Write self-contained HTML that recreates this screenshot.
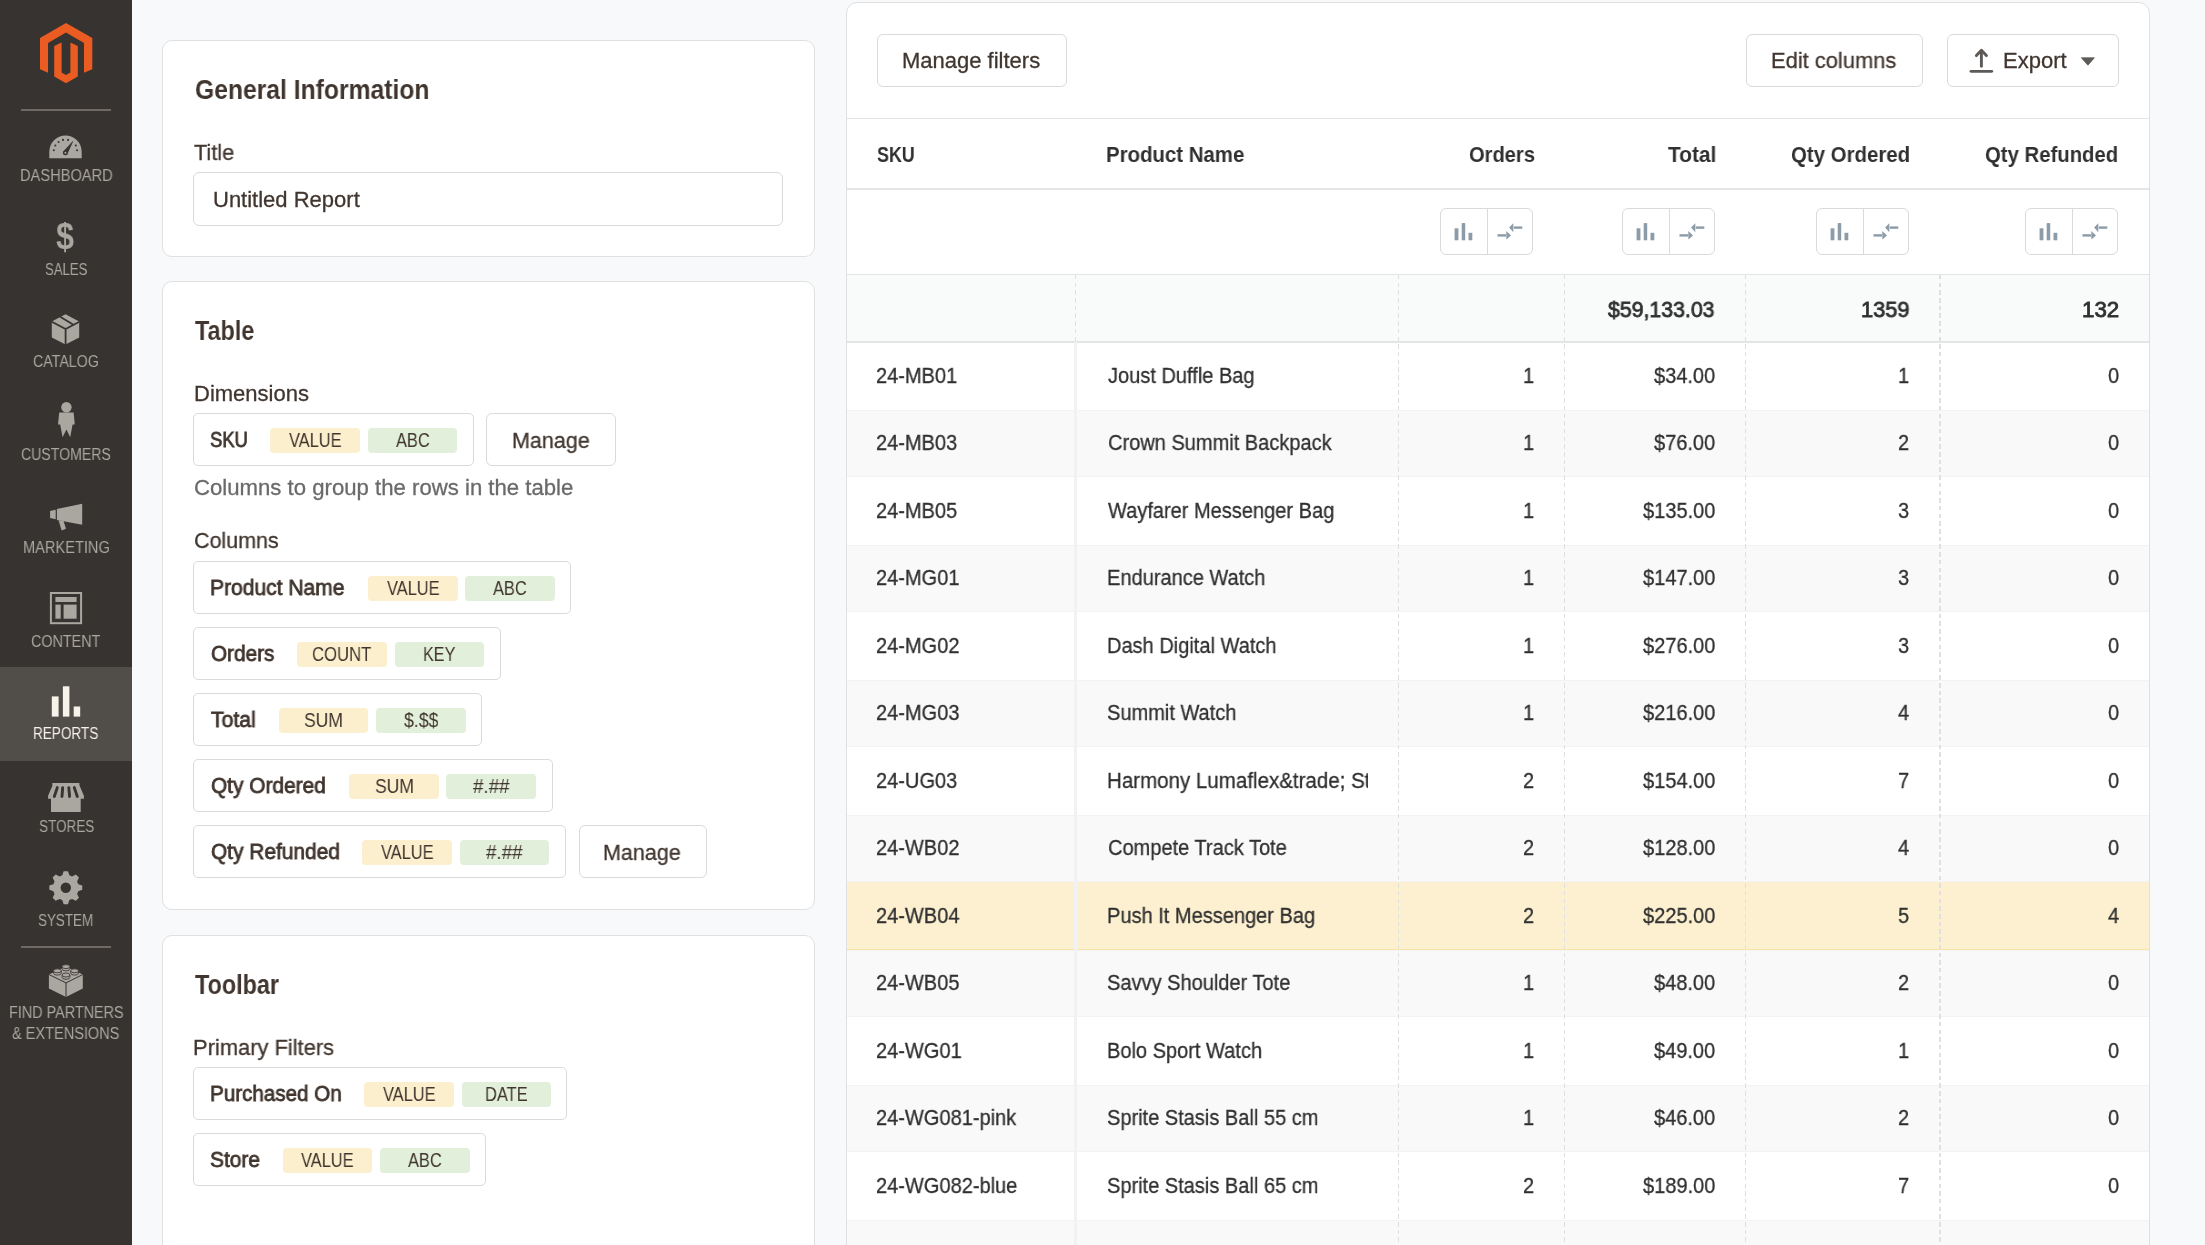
<!DOCTYPE html>
<html><head><meta charset="utf-8"><title>Report</title>
<style>
html,body{margin:0;padding:0;}
body{width:2205px;height:1245px;overflow:hidden;position:relative;background:#f8f9fa;font-family:"Liberation Sans",sans-serif;}
.t{position:absolute;line-height:40px;white-space:pre;transform-origin:0 0;will-change:transform;}
.a{position:absolute;box-sizing:border-box;}
svg{position:absolute;overflow:visible;}
</style></head><body>
<div class='a' style='left:0;top:0;width:132px;height:1245px;background:#373330'></div><div class='a' style='left:0;top:667px;width:132px;height:93.5px;background:#514d48'></div><svg style='left:0;top:0' width='132' height='100'>
<path fill='#eb5c22' d='M66 23 L92.3 38 L92.3 69.2 L84 72.8 L84 43 L66 32.6 L48 43 L48 72.8 L40 69.2 L40 38 Z'/>
<path fill='#eb5c22' d='M54.2 46 L61.6 42.4 L61.6 72.6 L66 75 L70.4 72.6 L70.4 42.4 L77.8 46 L77.8 76.5 L66 83.3 L54.2 76.5 Z'/>
</svg><div class='a' style='left:21px;top:109px;width:90px;height:1.5px;background:#6e6964'></div><div class='a' style='left:21px;top:946.3px;width:90px;height:1.5px;background:#6e6964'></div><svg style='left:0;top:0' width='132' height='200'>
<path fill='#aaa6a0' d='M49.3 158.2 L49.3 151.8 A16.2 16.2 0 0 1 81.7 151.8 L81.7 158.2 Z'/>
<g fill='#373330'>
<circle cx='53.8' cy='150.2' r='1.05'/><circle cx='55.3' cy='145.5' r='1.05'/><circle cx='58.6' cy='142' r='1.05'/>
<circle cx='63' cy='139.9' r='1.05'/><circle cx='68.1' cy='139.9' r='1.05'/>
<circle cx='75.8' cy='145.5' r='1.05'/><circle cx='77.1' cy='150.2' r='1.05'/>
<path d='M63.3 151.6 L72.6 141.2 L73.1 141.6 L67.6 153.6 Z'/>
<circle cx='65.4' cy='152.8' r='2.5'/>
</g>
<circle cx='65.4' cy='152.8' r='1.05' fill='#aaa6a0'/>
</svg><svg style='left:0;top:0' width='132' height='400'>
<path fill='#aaa6a0' d='M65.5 314.2 L79.2 321.6 L79.2 337.4 L65.5 344.6 L51.8 337.4 L51.8 321.6 Z'/>
<g stroke='#373330' stroke-width='1.8' fill='none'>
<path d='M51.8 321.8 L65.6 329 L79.4 321.8 M65.6 329 L65.6 345'/>
<path d='M60.2 316.7 L73.4 324.7'/>
</g>
</svg><svg style='left:0;top:0' width='132' height='460'>
<circle cx='66.4' cy='407.2' r='5.2' fill='#aaa6a0'/>
<path fill='#aaa6a0' d='M59.2 412.6 L73.6 412.6 L74.8 424.6 L72.6 424.6 L70.2 437.2 L66.4 429.5 L62.6 437.2 L60.2 424.6 L58 424.6 Z'/>
</svg><svg style='left:0;top:0' width='132' height='560'>
<path fill='#aaa6a0' d='M50.1 511 L55.7 509.7 L55.7 519.3 L50.1 518 Z'/>
<path fill='#aaa6a0' d='M56.9 509 L82.2 503.8 L82.2 524.8 L56.9 520 Z'/>
<path fill='#aaa6a0' d='M58.6 520.2 L63.6 521.1 L66 528.8 L61.6 530.5 Z'/>
</svg><svg style='left:0;top:0' width='132' height='660'>
<rect x='50.9' y='593' width='30.2' height='30.2' fill='none' stroke='#aaa6a0' stroke-width='2'/>
<rect x='55.4' y='597' width='21.2' height='5' fill='#aaa6a0'/>
<rect x='55.4' y='604.6' width='5.3' height='14.1' fill='#aaa6a0'/>
<rect x='63.6' y='604.6' width='13' height='14.1' fill='#aaa6a0'/>
</svg><svg style='left:0;top:0' width='132' height='760'>
<rect x='51.8' y='696.4' width='6.8' height='20.2' fill='#f7f3eb'/>
<rect x='62.9' y='686.3' width='6.5' height='30.3' fill='#f7f3eb'/>
<rect x='73.7' y='706.5' width='6.5' height='10.1' fill='#f7f3eb'/>
</svg><svg style='left:0;top:0' width='132' height='860'>
<path fill='#aaa6a0' d='M52.3 783.1 L79.4 783.1 L79.4 785.2 L83.9 795.7 L83.9 798.8 L80.7 798.8 L80.7 811.9 L51 811.9 L51 798.8 L48.1 798.8 L48.1 795.7 L52.6 785.2 L52.3 785.2 Z'/>
<g stroke='#373330' stroke-width='2.9' fill='none' stroke-linecap='round'>
<path d='M57.3 787.6 L54.3 796.5 M62.7 787.6 L62 796.5 M68.8 787.6 L69.6 796.5 M74.3 787.6 L77.3 796.5'/>
</g>
</svg><svg style='left:0;top:0' width='132' height='960'>
<path fill='#aaa6a0' fill-rule='evenodd' d='M62.24 875.30 L63.65 871.24 L67.95 871.24 L69.36 875.30 L72.05 876.41 L75.92 874.54 L78.96 877.58 L77.09 881.45 L78.20 884.14 L82.26 885.55 L82.26 889.85 L78.20 891.26 L77.09 893.95 L78.96 897.82 L75.92 900.86 L72.05 898.99 L69.36 900.10 L67.95 904.16 L63.65 904.16 L62.24 900.10 L59.55 898.99 L55.68 900.86 L52.64 897.82 L54.51 893.95 L53.40 891.26 L49.34 889.85 L49.34 885.55 L53.40 884.14 L54.51 881.45 L52.64 877.58 L55.68 874.54 L59.55 876.41 Z M71.0 887.7 A5.2 5.2 0 1 0 60.599999999999994 887.7 A5.2 5.2 0 1 0 71.0 887.7 Z'/>
</svg><svg style='left:0;top:0' width='132' height='1000'>
<path fill='#aaa6a0' d='M66 966.5 L82.8 974.5 L82.8 988.5 L66 997.1 L48.9 988.5 L48.9 974.5 Z'/>
<path d='M48.9 974.5 L66 982.9 L82.8 974.5 M66 982.9 L66 997.1' stroke='#373330' stroke-width='1' fill='none'/>
<g fill='#aaa6a0' stroke='#373330' stroke-width='0.85'>
<path stroke='none' d='M62.1 966.6 L62.1 968.9 A3.9 2 0 0 0 69.9 968.9 L69.9 966.6 Z'/><path fill='none' d='M62.1 966.6 L62.1 968.9 A3.9 2 0 0 0 69.9 968.9 L69.9 966.6'/><ellipse cx='66' cy='966.6' rx='3.9' ry='2'/><path stroke='none' d='M53.5 970.8 L53.5 973.0999999999999 A3.9 2 0 0 0 61.3 973.0999999999999 L61.3 970.8 Z'/><path fill='none' d='M53.5 970.8 L53.5 973.0999999999999 A3.9 2 0 0 0 61.3 973.0999999999999 L61.3 970.8'/><ellipse cx='57.4' cy='970.8' rx='3.9' ry='2'/><path stroke='none' d='M70.69999999999999 970.8 L70.69999999999999 973.0999999999999 A3.9 2 0 0 0 78.5 973.0999999999999 L78.5 970.8 Z'/><path fill='none' d='M70.69999999999999 970.8 L70.69999999999999 973.0999999999999 A3.9 2 0 0 0 78.5 973.0999999999999 L78.5 970.8'/><ellipse cx='74.6' cy='970.8' rx='3.9' ry='2'/><path stroke='none' d='M62.1 975 L62.1 977.3 A3.9 2 0 0 0 69.9 977.3 L69.9 975 Z'/><path fill='none' d='M62.1 975 L62.1 977.3 A3.9 2 0 0 0 69.9 977.3 L69.9 975'/><ellipse cx='66' cy='975' rx='3.9' ry='2'/>
</g>
</svg><div class='a' style='left:162.3px;top:40.3px;width:653px;height:216.7px;background:#fff;border:1.6px solid #dfe0e1;border-radius:10px'></div><div class='a' style='left:162.3px;top:281.1px;width:653px;height:628.8px;background:#fff;border:1.6px solid #dfe0e1;border-radius:10px'></div><div class='a' style='left:162.3px;top:935.3px;width:653px;height:400px;background:#fff;border:1.6px solid #dfe0e1;border-radius:10px'></div><div class='a' style='left:193.3px;top:172.3px;width:590px;height:53.5px;border:1.5px solid #d9d9d9;border-radius:6px;background:#fff'></div><div class='a' style='left:193.3px;top:413.3px;width:280.7px;height:52.8px;border:1.5px solid #dadada;border-radius:5px;background:#fff'></div><div class='a' style='left:270.2px;top:427.90000000000003px;width:89.6px;height:25.4px;background:#fcefcd;border-radius:4px'></div><div class='a' style='left:367.6px;top:427.90000000000003px;width:89.6px;height:25.4px;background:#e2efda;border-radius:4px'></div><div class='a' style='left:486.3px;top:413.3px;width:129.5px;height:53px;border:1.5px solid #dadada;border-radius:6px;background:#fff'></div><div class='a' style='left:193.3px;top:561.3px;width:377.7px;height:52.8px;border:1.5px solid #dadada;border-radius:5px;background:#fff'></div><div class='a' style='left:368.0px;top:575.9px;width:89.6px;height:25.4px;background:#fcefcd;border-radius:4px'></div><div class='a' style='left:465.4px;top:575.9px;width:89.6px;height:25.4px;background:#e2efda;border-radius:4px'></div><div class='a' style='left:193.3px;top:627.3px;width:307.7px;height:52.8px;border:1.5px solid #dadada;border-radius:5px;background:#fff'></div><div class='a' style='left:297.3px;top:641.9px;width:89.6px;height:25.4px;background:#fcefcd;border-radius:4px'></div><div class='a' style='left:394.7px;top:641.9px;width:89.6px;height:25.4px;background:#e2efda;border-radius:4px'></div><div class='a' style='left:193.3px;top:693.3px;width:288.7px;height:52.8px;border:1.5px solid #dadada;border-radius:5px;background:#fff'></div><div class='a' style='left:278.6px;top:707.9px;width:89.6px;height:25.4px;background:#fcefcd;border-radius:4px'></div><div class='a' style='left:376.0px;top:707.9px;width:89.6px;height:25.4px;background:#e2efda;border-radius:4px'></div><div class='a' style='left:193.3px;top:759.3px;width:359.7px;height:52.8px;border:1.5px solid #dadada;border-radius:5px;background:#fff'></div><div class='a' style='left:349.0px;top:773.9px;width:89.6px;height:25.4px;background:#fcefcd;border-radius:4px'></div><div class='a' style='left:446.4px;top:773.9px;width:89.6px;height:25.4px;background:#e2efda;border-radius:4px'></div><div class='a' style='left:193.3px;top:825.3px;width:372.7px;height:52.8px;border:1.5px solid #dadada;border-radius:5px;background:#fff'></div><div class='a' style='left:362.4px;top:839.9px;width:89.6px;height:25.4px;background:#fcefcd;border-radius:4px'></div><div class='a' style='left:459.8px;top:839.9px;width:89.6px;height:25.4px;background:#e2efda;border-radius:4px'></div><div class='a' style='left:578.5px;top:825.3px;width:128.2px;height:53px;border:1.5px solid #dadada;border-radius:6px;background:#fff'></div><div class='a' style='left:193.3px;top:1067.3px;width:374.2px;height:52.8px;border:1.5px solid #dadada;border-radius:5px;background:#fff'></div><div class='a' style='left:364.3px;top:1081.8999999999999px;width:89.6px;height:25.4px;background:#fcefcd;border-radius:4px'></div><div class='a' style='left:461.7px;top:1081.8999999999999px;width:89.6px;height:25.4px;background:#e2efda;border-radius:4px'></div><div class='a' style='left:193.3px;top:1133.3px;width:292.7px;height:52.8px;border:1.5px solid #dadada;border-radius:5px;background:#fff'></div><div class='a' style='left:282.7px;top:1147.8999999999999px;width:89.6px;height:25.4px;background:#fcefcd;border-radius:4px'></div><div class='a' style='left:380.1px;top:1147.8999999999999px;width:89.6px;height:25.4px;background:#e2efda;border-radius:4px'></div><div class='a' style='left:845.8px;top:2.3px;width:1304.5px;height:1300px;background:#fff;border:1.6px solid #dfe0e1;border-radius:11px'></div><div class='a' style='left:876.7px;top:33.8px;width:190px;height:53px;border:1.5px solid #dadada;border-radius:6px;background:#fff'></div><div class='a' style='left:1746.3px;top:33.8px;width:176.5px;height:53px;border:1.5px solid #dadada;border-radius:6px;background:#fff'></div><div class='a' style='left:1947.2px;top:33.8px;width:172px;height:53px;border:1.5px solid #dadada;border-radius:6px;background:#fff'></div><svg style='left:0;top:0' width='2205' height='100'>
<path d='M1981.4 51 L1981.4 66.2' stroke='#5d5a58' stroke-width='2.9' stroke-linecap='round'/>
<path d='M1976.4 55.6 L1981.4 50.3 L1986.4 55.6' stroke='#5d5a58' stroke-width='2.9' fill='none' stroke-linecap='round' stroke-linejoin='round'/>
<path d='M1971 71.3 L1991.8 71.3' stroke='#5d5a58' stroke-width='2.8' stroke-linecap='round'/>
<path d='M2081.4 57.8 L2094.4 57.8 L2087.9 65.2 Z' fill='#5d5a58' stroke='#5d5a58' stroke-width='0.8' stroke-linejoin='round'/>
</svg><div class='a' style='left:847.3px;top:117.8px;width:1301.5000000000002px;height:1.5px;background:#e4e5e6'></div><div class='a' style='left:847.3px;top:188.2px;width:1301.5000000000002px;height:1.5px;background:#e4e5e6'></div><div class='a' style='left:847.3px;top:274.5px;width:1301.5px;height:67.5px;background:#f9fafa'></div><div class='a' style='left:847.3px;top:273.6px;width:1301.5000000000002px;height:1.5px;background:#e4e5e6'></div><div class='a' style='left:847.3px;top:341.3px;width:1301.5000000000002px;height:1.5px;background:#e4e5e6'></div><div class='a' style='left:1440.4px;top:208.2px;width:93px;height:46.8px;border:1.5px solid #dadada;border-radius:6px;background:#fff'></div><div class='a' style='left:1486.6000000000001px;top:208.2px;width:1.5px;height:46.8px;background:#dadada'></div><svg style='left:1440.4px;top:208.2px' width='93' height='47'>
<rect x='14.6' y='20.3' width='3.8' height='12' fill='#8b9ba8'/>
<rect x='21.7' y='15.1' width='3.5' height='17.2' fill='#8b9ba8'/>
<rect x='28.5' y='24.8' width='3.8' height='7.5' fill='#8b9ba8'/>
<path d='M57.5 27.4 L66 27.4' stroke='#8b9ba8' stroke-width='2.4'/>
<path d='M66.3 22.9 L71 27.4 L66.3 31.6 Z' fill='#8b9ba8'/>
<path d='M73.8 19.6 L82.3 19.6' stroke='#8b9ba8' stroke-width='2.4'/>
<path d='M73.3 15.3 L69.1 19.6 L73.3 24.3 Z' fill='#8b9ba8'/>
</svg><div class='a' style='left:1622.4px;top:208.2px;width:93px;height:46.8px;border:1.5px solid #dadada;border-radius:6px;background:#fff'></div><div class='a' style='left:1668.6000000000001px;top:208.2px;width:1.5px;height:46.8px;background:#dadada'></div><svg style='left:1622.4px;top:208.2px' width='93' height='47'>
<rect x='14.6' y='20.3' width='3.8' height='12' fill='#8b9ba8'/>
<rect x='21.7' y='15.1' width='3.5' height='17.2' fill='#8b9ba8'/>
<rect x='28.5' y='24.8' width='3.8' height='7.5' fill='#8b9ba8'/>
<path d='M57.5 27.4 L66 27.4' stroke='#8b9ba8' stroke-width='2.4'/>
<path d='M66.3 22.9 L71 27.4 L66.3 31.6 Z' fill='#8b9ba8'/>
<path d='M73.8 19.6 L82.3 19.6' stroke='#8b9ba8' stroke-width='2.4'/>
<path d='M73.3 15.3 L69.1 19.6 L73.3 24.3 Z' fill='#8b9ba8'/>
</svg><div class='a' style='left:1816.3px;top:208.2px;width:93px;height:46.8px;border:1.5px solid #dadada;border-radius:6px;background:#fff'></div><div class='a' style='left:1862.5px;top:208.2px;width:1.5px;height:46.8px;background:#dadada'></div><svg style='left:1816.3px;top:208.2px' width='93' height='47'>
<rect x='14.6' y='20.3' width='3.8' height='12' fill='#8b9ba8'/>
<rect x='21.7' y='15.1' width='3.5' height='17.2' fill='#8b9ba8'/>
<rect x='28.5' y='24.8' width='3.8' height='7.5' fill='#8b9ba8'/>
<path d='M57.5 27.4 L66 27.4' stroke='#8b9ba8' stroke-width='2.4'/>
<path d='M66.3 22.9 L71 27.4 L66.3 31.6 Z' fill='#8b9ba8'/>
<path d='M73.8 19.6 L82.3 19.6' stroke='#8b9ba8' stroke-width='2.4'/>
<path d='M73.3 15.3 L69.1 19.6 L73.3 24.3 Z' fill='#8b9ba8'/>
</svg><div class='a' style='left:2025.4px;top:208.2px;width:93px;height:46.8px;border:1.5px solid #dadada;border-radius:6px;background:#fff'></div><div class='a' style='left:2071.6px;top:208.2px;width:1.5px;height:46.8px;background:#dadada'></div><svg style='left:2025.4px;top:208.2px' width='93' height='47'>
<rect x='14.6' y='20.3' width='3.8' height='12' fill='#8b9ba8'/>
<rect x='21.7' y='15.1' width='3.5' height='17.2' fill='#8b9ba8'/>
<rect x='28.5' y='24.8' width='3.8' height='7.5' fill='#8b9ba8'/>
<path d='M57.5 27.4 L66 27.4' stroke='#8b9ba8' stroke-width='2.4'/>
<path d='M66.3 22.9 L71 27.4 L66.3 31.6 Z' fill='#8b9ba8'/>
<path d='M73.8 19.6 L82.3 19.6' stroke='#8b9ba8' stroke-width='2.4'/>
<path d='M73.3 15.3 L69.1 19.6 L73.3 24.3 Z' fill='#8b9ba8'/>
</svg><div class='a' style='left:847.3px;top:409.50px;width:1301.5px;height:67.50px;background:#f9f9f9;border-top:1.5px solid #f3f3f3;border-bottom:1.5px solid #f3f3f3'></div><div class='a' style='left:847.3px;top:544.50px;width:1301.5px;height:67.50px;background:#f9f9f9;border-top:1.5px solid #f3f3f3;border-bottom:1.5px solid #f3f3f3'></div><div class='a' style='left:847.3px;top:679.50px;width:1301.5px;height:67.50px;background:#f9f9f9;border-top:1.5px solid #f3f3f3;border-bottom:1.5px solid #f3f3f3'></div><div class='a' style='left:847.3px;top:814.50px;width:1301.5px;height:67.50px;background:#f9f9f9;border-top:1.5px solid #f3f3f3;border-bottom:1.5px solid #f3f3f3'></div><div class='a' style='left:847.3px;top:882.00px;width:1301.5px;height:67.50px;background:#fcf0d0;border-bottom:1.5px solid #f7e5a6'></div><div class='a' style='left:847.3px;top:949.50px;width:1301.5px;height:67.50px;background:#f9f9f9;border-top:1.5px solid #f3f3f3;border-bottom:1.5px solid #f3f3f3'></div><div class='a' style='left:847.3px;top:1084.50px;width:1301.5px;height:67.50px;background:#f9f9f9;border-top:1.5px solid #f3f3f3;border-bottom:1.5px solid #f3f3f3'></div><div class='a' style='left:847.3px;top:1219.50px;width:1301.5px;height:67.50px;background:#f9f9f9;border-top:1.5px solid #f3f3f3;border-bottom:1.5px solid #f3f3f3'></div><div class='a' style='left:1074.3px;top:342px;width:2.5px;height:903px;background:#f1f2f3'></div><div class='a' style='left:1074.75px;top:275px;width:1.5px;height:67px;background:repeating-linear-gradient(to bottom,#e0e0e0 0,#e0e0e0 4.5px,transparent 4.5px,transparent 7.7px)'></div><div class='a' style='left:1397.95px;top:275px;width:1.5px;height:970px;background:repeating-linear-gradient(to bottom,#e0e0e0 0,#e0e0e0 4.5px,transparent 4.5px,transparent 7.7px)'></div><div class='a' style='left:1563.75px;top:275px;width:1.5px;height:970px;background:repeating-linear-gradient(to bottom,#e0e0e0 0,#e0e0e0 4.5px,transparent 4.5px,transparent 7.7px)'></div><div class='a' style='left:1744.95px;top:275px;width:1.5px;height:970px;background:repeating-linear-gradient(to bottom,#e0e0e0 0,#e0e0e0 4.5px,transparent 4.5px,transparent 7.7px)'></div><div class='a' style='left:1939.45px;top:275px;width:1.5px;height:970px;background:repeating-linear-gradient(to bottom,#e0e0e0 0,#e0e0e0 4.5px,transparent 4.5px,transparent 7.7px)'></div>
<div class='t' style='left:55.90px;top:217.01px;font-size:36px;font-weight:700;color:#aaa6a0;transform:scaleX(0.9000);'>$</div><div class='t' style='left:19.80px;top:156.46px;font-size:16px;font-weight:400;color:#aaa6a0;transform:scaleX(0.9149);'>DASHBOARD</div><div class='t' style='left:44.65px;top:249.66px;font-size:16px;font-weight:400;color:#aaa6a0;transform:scaleX(0.8212);'>SALES</div><div class='t' style='left:33.15px;top:342.16px;font-size:16px;font-weight:400;color:#aaa6a0;transform:scaleX(0.8878);'>CATALOG</div><div class='t' style='left:21.05px;top:435.26px;font-size:16px;font-weight:400;color:#aaa6a0;transform:scaleX(0.8814);'>CUSTOMERS</div><div class='t' style='left:22.65px;top:528.36px;font-size:16px;font-weight:400;color:#aaa6a0;transform:scaleX(0.9126);'>MARKETING</div><div class='t' style='left:31.00px;top:621.86px;font-size:16px;font-weight:400;color:#aaa6a0;transform:scaleX(0.8974);'>CONTENT</div><div class='t' style='left:33.40px;top:714.36px;font-size:16px;font-weight:400;color:#f7f3eb;transform:scaleX(0.8468);'>REPORTS</div><div class='t' style='left:38.55px;top:807.26px;font-size:16px;font-weight:400;color:#aaa6a0;transform:scaleX(0.8446);'>STORES</div><div class='t' style='left:38.35px;top:900.56px;font-size:16px;font-weight:400;color:#aaa6a0;transform:scaleX(0.8379);'>SYSTEM</div><div class='t' style='left:8.90px;top:993.46px;font-size:16px;font-weight:400;color:#aaa6a0;transform:scaleX(0.8992);'>FIND PARTNERS</div><div class='t' style='left:12.40px;top:1013.56px;font-size:16px;font-weight:400;color:#aaa6a0;transform:scaleX(0.9085);'>&amp; EXTENSIONS</div><div class='t' style='left:194.50px;top:70.30px;font-size:27px;font-weight:700;color:#41362f;transform:scaleX(0.9141);'>General Information</div><div class='t' style='left:194.00px;top:133.15px;font-size:22px;font-weight:400;color:#41362f;transform:scaleX(0.9878);-webkit-text-stroke:0.3px #41362f;'>Title</div><div class='t' style='left:213.00px;top:179.95px;font-size:22px;font-weight:400;color:#41362f;-webkit-text-stroke:0.3px #41362f;'>Untitled Report</div><div class='t' style='left:194.97px;top:311.30px;font-size:27px;font-weight:700;color:#41362f;transform:scaleX(0.8652);'>Table</div><div class='t' style='left:193.80px;top:373.85px;font-size:22px;font-weight:400;color:#41362f;transform:scaleX(0.9965);-webkit-text-stroke:0.3px #41362f;'>Dimensions</div><div class='t' style='left:194.40px;top:468.45px;font-size:22px;font-weight:400;color:#6a6a6a;transform:scaleX(1.0072);-webkit-text-stroke:0.3px #6a6a6a;'>Columns to group the rows in the table</div><div class='t' style='left:194.40px;top:521.35px;font-size:22px;font-weight:400;color:#41362f;transform:scaleX(0.9759);-webkit-text-stroke:0.3px #41362f;'>Columns</div><div class='t' style='left:194.87px;top:965.20px;font-size:27px;font-weight:700;color:#41362f;transform:scaleX(0.8657);'>Toolbar</div><div class='t' style='left:193.00px;top:1027.65px;font-size:22px;font-weight:400;color:#41362f;transform:scaleX(0.9950);-webkit-text-stroke:0.3px #41362f;'>Primary Filters</div><div class='t' style='left:209.96px;top:420.05px;font-size:22px;font-weight:400;color:#41362f;transform:scaleX(0.8372);-webkit-text-stroke:0.8px #41362f;'>SKU</div><div class='t' style='left:288.75px;top:419.56px;font-size:20px;font-weight:400;color:#41362f;transform:scaleX(0.8203);'>VALUE</div><div class='t' style='left:395.60px;top:419.56px;font-size:20px;font-weight:400;color:#41362f;transform:scaleX(0.8195);'>ABC</div><div class='t' style='left:511.92px;top:420.95px;font-size:22px;font-weight:400;color:#41362f;transform:scaleX(0.9782);-webkit-text-stroke:0.3px #41362f;'>Manage</div><div class='t' style='left:209.84px;top:568.05px;font-size:22px;font-weight:400;color:#41362f;transform:scaleX(0.9557);-webkit-text-stroke:0.8px #41362f;'>Product Name</div><div class='t' style='left:386.55px;top:567.56px;font-size:20px;font-weight:400;color:#41362f;transform:scaleX(0.8203);'>VALUE</div><div class='t' style='left:493.40px;top:567.56px;font-size:20px;font-weight:400;color:#41362f;transform:scaleX(0.8195);'>ABC</div><div class='t' style='left:210.80px;top:634.05px;font-size:22px;font-weight:400;color:#41362f;transform:scaleX(0.9418);-webkit-text-stroke:0.8px #41362f;'>Orders</div><div class='t' style='left:312.10px;top:633.56px;font-size:20px;font-weight:400;color:#41362f;transform:scaleX(0.8333);'>COUNT</div><div class='t' style='left:422.94px;top:633.56px;font-size:20px;font-weight:400;color:#41362f;transform:scaleX(0.8077);'>KEY</div><div class='t' style='left:210.80px;top:700.05px;font-size:22px;font-weight:400;color:#41362f;transform:scaleX(0.9652);-webkit-text-stroke:0.8px #41362f;'>Total</div><div class='t' style='left:304.10px;top:699.56px;font-size:20px;font-weight:400;color:#41362f;transform:scaleX(0.8773);'>SUM</div><div class='t' style='left:403.55px;top:699.56px;font-size:20px;font-weight:400;color:#41362f;transform:scaleX(0.8846);'>$.$$</div><div class='t' style='left:210.80px;top:766.05px;font-size:22px;font-weight:400;color:#41362f;transform:scaleX(0.9488);-webkit-text-stroke:0.8px #41362f;'>Qty Ordered</div><div class='t' style='left:374.50px;top:765.56px;font-size:20px;font-weight:400;color:#41362f;transform:scaleX(0.8773);'>SUM</div><div class='t' style='left:472.89px;top:765.56px;font-size:20px;font-weight:400;color:#41362f;transform:scaleX(0.9390);'>#.##</div><div class='t' style='left:210.80px;top:832.05px;font-size:22px;font-weight:400;color:#41362f;transform:scaleX(0.9496);-webkit-text-stroke:0.8px #41362f;'>Qty Refunded</div><div class='t' style='left:380.95px;top:831.56px;font-size:20px;font-weight:400;color:#41362f;transform:scaleX(0.8203);'>VALUE</div><div class='t' style='left:486.29px;top:831.56px;font-size:20px;font-weight:400;color:#41362f;transform:scaleX(0.9390);'>#.##</div><div class='t' style='left:603.47px;top:832.95px;font-size:22px;font-weight:400;color:#41362f;transform:scaleX(0.9782);-webkit-text-stroke:0.3px #41362f;'>Manage</div><div class='t' style='left:209.86px;top:1074.05px;font-size:22px;font-weight:400;color:#41362f;transform:scaleX(0.9360);-webkit-text-stroke:0.8px #41362f;'>Purchased On</div><div class='t' style='left:382.85px;top:1073.56px;font-size:20px;font-weight:400;color:#41362f;transform:scaleX(0.8203);'>VALUE</div><div class='t' style='left:484.68px;top:1073.56px;font-size:20px;font-weight:400;color:#41362f;transform:scaleX(0.8235);'>DATE</div><div class='t' style='left:209.85px;top:1140.05px;font-size:22px;font-weight:400;color:#41362f;transform:scaleX(0.9510);-webkit-text-stroke:0.8px #41362f;'>Store</div><div class='t' style='left:301.25px;top:1139.56px;font-size:20px;font-weight:400;color:#41362f;transform:scaleX(0.8203);'>VALUE</div><div class='t' style='left:408.10px;top:1139.56px;font-size:20px;font-weight:400;color:#41362f;transform:scaleX(0.8195);'>ABC</div><div class='t' style='left:902.10px;top:41.45px;font-size:22px;font-weight:400;color:#41362f;-webkit-text-stroke:0.3px #41362f;'>Manage filters</div><div class='t' style='left:1771.41px;top:41.45px;font-size:22px;font-weight:400;color:#41362f;transform:scaleX(0.9944);-webkit-text-stroke:0.3px #41362f;'>Edit columns</div><div class='t' style='left:2002.60px;top:41.45px;font-size:22px;font-weight:400;color:#41362f;-webkit-text-stroke:0.3px #41362f;'>Export</div><div class='t' style='left:876.70px;top:134.80px;font-size:22px;font-weight:700;color:#303030;transform:scaleX(0.8130);'>SKU</div><div class='t' style='left:1105.90px;top:134.80px;font-size:22px;font-weight:700;color:#303030;transform:scaleX(0.9275);'>Product Name</div><div class='t' style='left:1468.50px;top:134.80px;font-size:22px;font-weight:700;color:#303030;transform:scaleX(0.9139);'>Orders</div><div class='t' style='left:1668.10px;top:134.80px;font-size:22px;font-weight:700;color:#303030;transform:scaleX(0.9500);'>Total</div><div class='t' style='left:1790.60px;top:134.80px;font-size:22px;font-weight:700;color:#303030;transform:scaleX(0.9273);'>Qty Ordered</div><div class='t' style='left:1985.20px;top:134.80px;font-size:22px;font-weight:700;color:#303030;transform:scaleX(0.9236);'>Qty Refunded</div><div class='t' style='left:876.40px;top:355.85px;font-size:22px;font-weight:400;color:#303030;transform:scaleX(0.9100);-webkit-text-stroke:0.3px #303030;'>24-MB01</div><div class='t' style='left:1107.50px;top:355.85px;font-size:22px;font-weight:400;color:#303030;transform:scaleX(0.9100);-webkit-text-stroke:0.3px #303030;'>Joust Duffle Bag</div><div class='t' style='left:1523.38px;top:355.85px;font-size:22px;font-weight:400;color:#303030;transform:scaleX(0.9100);-webkit-text-stroke:0.3px #303030;'>1</div><div class='t' style='left:1654.33px;top:355.85px;font-size:22px;font-weight:400;color:#303030;transform:scaleX(0.9100);-webkit-text-stroke:0.3px #303030;'>$34.00</div><div class='t' style='left:1898.38px;top:355.85px;font-size:22px;font-weight:400;color:#303030;transform:scaleX(0.9100);-webkit-text-stroke:0.3px #303030;'>1</div><div class='t' style='left:2107.58px;top:355.85px;font-size:22px;font-weight:400;color:#303030;transform:scaleX(0.9100);-webkit-text-stroke:0.3px #303030;'>0</div><div class='t' style='left:876.40px;top:423.35px;font-size:22px;font-weight:400;color:#303030;transform:scaleX(0.9100);-webkit-text-stroke:0.3px #303030;'>24-MB03</div><div class='t' style='left:1107.50px;top:423.35px;font-size:22px;font-weight:400;color:#303030;transform:scaleX(0.9100);-webkit-text-stroke:0.3px #303030;'>Crown Summit Backpack</div><div class='t' style='left:1523.38px;top:423.35px;font-size:22px;font-weight:400;color:#303030;transform:scaleX(0.9100);-webkit-text-stroke:0.3px #303030;'>1</div><div class='t' style='left:1654.33px;top:423.35px;font-size:22px;font-weight:400;color:#303030;transform:scaleX(0.9100);-webkit-text-stroke:0.3px #303030;'>$76.00</div><div class='t' style='left:1898.38px;top:423.35px;font-size:22px;font-weight:400;color:#303030;transform:scaleX(0.9100);-webkit-text-stroke:0.3px #303030;'>2</div><div class='t' style='left:2107.58px;top:423.35px;font-size:22px;font-weight:400;color:#303030;transform:scaleX(0.9100);-webkit-text-stroke:0.3px #303030;'>0</div><div class='t' style='left:876.40px;top:490.85px;font-size:22px;font-weight:400;color:#303030;transform:scaleX(0.9100);-webkit-text-stroke:0.3px #303030;'>24-MB05</div><div class='t' style='left:1107.50px;top:490.85px;font-size:22px;font-weight:400;color:#303030;transform:scaleX(0.9100);-webkit-text-stroke:0.3px #303030;'>Wayfarer Messenger Bag</div><div class='t' style='left:1523.38px;top:490.85px;font-size:22px;font-weight:400;color:#303030;transform:scaleX(0.9100);-webkit-text-stroke:0.3px #303030;'>1</div><div class='t' style='left:1642.50px;top:490.85px;font-size:22px;font-weight:400;color:#303030;transform:scaleX(0.9100);-webkit-text-stroke:0.3px #303030;'>$135.00</div><div class='t' style='left:1898.38px;top:490.85px;font-size:22px;font-weight:400;color:#303030;transform:scaleX(0.9100);-webkit-text-stroke:0.3px #303030;'>3</div><div class='t' style='left:2107.58px;top:490.85px;font-size:22px;font-weight:400;color:#303030;transform:scaleX(0.9100);-webkit-text-stroke:0.3px #303030;'>0</div><div class='t' style='left:876.40px;top:558.35px;font-size:22px;font-weight:400;color:#303030;transform:scaleX(0.9100);-webkit-text-stroke:0.3px #303030;'>24-MG01</div><div class='t' style='left:1106.59px;top:558.35px;font-size:22px;font-weight:400;color:#303030;transform:scaleX(0.9100);-webkit-text-stroke:0.3px #303030;'>Endurance Watch</div><div class='t' style='left:1523.38px;top:558.35px;font-size:22px;font-weight:400;color:#303030;transform:scaleX(0.9100);-webkit-text-stroke:0.3px #303030;'>1</div><div class='t' style='left:1642.50px;top:558.35px;font-size:22px;font-weight:400;color:#303030;transform:scaleX(0.9100);-webkit-text-stroke:0.3px #303030;'>$147.00</div><div class='t' style='left:1898.38px;top:558.35px;font-size:22px;font-weight:400;color:#303030;transform:scaleX(0.9100);-webkit-text-stroke:0.3px #303030;'>3</div><div class='t' style='left:2107.58px;top:558.35px;font-size:22px;font-weight:400;color:#303030;transform:scaleX(0.9100);-webkit-text-stroke:0.3px #303030;'>0</div><div class='t' style='left:876.40px;top:625.85px;font-size:22px;font-weight:400;color:#303030;transform:scaleX(0.9100);-webkit-text-stroke:0.3px #303030;'>24-MG02</div><div class='t' style='left:1106.59px;top:625.85px;font-size:22px;font-weight:400;color:#303030;transform:scaleX(0.9100);-webkit-text-stroke:0.3px #303030;'>Dash Digital Watch</div><div class='t' style='left:1523.38px;top:625.85px;font-size:22px;font-weight:400;color:#303030;transform:scaleX(0.9100);-webkit-text-stroke:0.3px #303030;'>1</div><div class='t' style='left:1642.50px;top:625.85px;font-size:22px;font-weight:400;color:#303030;transform:scaleX(0.9100);-webkit-text-stroke:0.3px #303030;'>$276.00</div><div class='t' style='left:1898.38px;top:625.85px;font-size:22px;font-weight:400;color:#303030;transform:scaleX(0.9100);-webkit-text-stroke:0.3px #303030;'>3</div><div class='t' style='left:2107.58px;top:625.85px;font-size:22px;font-weight:400;color:#303030;transform:scaleX(0.9100);-webkit-text-stroke:0.3px #303030;'>0</div><div class='t' style='left:876.40px;top:693.35px;font-size:22px;font-weight:400;color:#303030;transform:scaleX(0.9100);-webkit-text-stroke:0.3px #303030;'>24-MG03</div><div class='t' style='left:1106.59px;top:693.35px;font-size:22px;font-weight:400;color:#303030;transform:scaleX(0.9100);-webkit-text-stroke:0.3px #303030;'>Summit Watch</div><div class='t' style='left:1523.38px;top:693.35px;font-size:22px;font-weight:400;color:#303030;transform:scaleX(0.9100);-webkit-text-stroke:0.3px #303030;'>1</div><div class='t' style='left:1642.50px;top:693.35px;font-size:22px;font-weight:400;color:#303030;transform:scaleX(0.9100);-webkit-text-stroke:0.3px #303030;'>$216.00</div><div class='t' style='left:1898.38px;top:693.35px;font-size:22px;font-weight:400;color:#303030;transform:scaleX(0.9100);-webkit-text-stroke:0.3px #303030;'>4</div><div class='t' style='left:2107.58px;top:693.35px;font-size:22px;font-weight:400;color:#303030;transform:scaleX(0.9100);-webkit-text-stroke:0.3px #303030;'>0</div><div class='t' style='left:876.40px;top:760.85px;font-size:22px;font-weight:400;color:#303030;transform:scaleX(0.9100);-webkit-text-stroke:0.3px #303030;'>24-UG03</div><div class='t' style='left:1107.47px;top:760.85px;font-size:22px;font-weight:400;color:#303030;transform:scaleX(0.9326);-webkit-text-stroke:0.3px #303030;'>Harmony Lumaflex&amp;trade; St</div><div class='t' style='left:1523.38px;top:760.85px;font-size:22px;font-weight:400;color:#303030;transform:scaleX(0.9100);-webkit-text-stroke:0.3px #303030;'>2</div><div class='t' style='left:1642.50px;top:760.85px;font-size:22px;font-weight:400;color:#303030;transform:scaleX(0.9100);-webkit-text-stroke:0.3px #303030;'>$154.00</div><div class='t' style='left:1898.38px;top:760.85px;font-size:22px;font-weight:400;color:#303030;transform:scaleX(0.9100);-webkit-text-stroke:0.3px #303030;'>7</div><div class='t' style='left:2107.58px;top:760.85px;font-size:22px;font-weight:400;color:#303030;transform:scaleX(0.9100);-webkit-text-stroke:0.3px #303030;'>0</div><div class='t' style='left:876.40px;top:828.35px;font-size:22px;font-weight:400;color:#303030;transform:scaleX(0.9100);-webkit-text-stroke:0.3px #303030;'>24-WB02</div><div class='t' style='left:1107.50px;top:828.35px;font-size:22px;font-weight:400;color:#303030;transform:scaleX(0.9100);-webkit-text-stroke:0.3px #303030;'>Compete Track Tote</div><div class='t' style='left:1523.38px;top:828.35px;font-size:22px;font-weight:400;color:#303030;transform:scaleX(0.9100);-webkit-text-stroke:0.3px #303030;'>2</div><div class='t' style='left:1642.50px;top:828.35px;font-size:22px;font-weight:400;color:#303030;transform:scaleX(0.9100);-webkit-text-stroke:0.3px #303030;'>$128.00</div><div class='t' style='left:1898.38px;top:828.35px;font-size:22px;font-weight:400;color:#303030;transform:scaleX(0.9100);-webkit-text-stroke:0.3px #303030;'>4</div><div class='t' style='left:2107.58px;top:828.35px;font-size:22px;font-weight:400;color:#303030;transform:scaleX(0.9100);-webkit-text-stroke:0.3px #303030;'>0</div><div class='t' style='left:876.40px;top:895.85px;font-size:22px;font-weight:400;color:#303030;transform:scaleX(0.9100);-webkit-text-stroke:0.3px #303030;'>24-WB04</div><div class='t' style='left:1106.59px;top:895.85px;font-size:22px;font-weight:400;color:#303030;transform:scaleX(0.9100);-webkit-text-stroke:0.3px #303030;'>Push It Messenger Bag</div><div class='t' style='left:1523.38px;top:895.85px;font-size:22px;font-weight:400;color:#303030;transform:scaleX(0.9100);-webkit-text-stroke:0.3px #303030;'>2</div><div class='t' style='left:1642.50px;top:895.85px;font-size:22px;font-weight:400;color:#303030;transform:scaleX(0.9100);-webkit-text-stroke:0.3px #303030;'>$225.00</div><div class='t' style='left:1898.38px;top:895.85px;font-size:22px;font-weight:400;color:#303030;transform:scaleX(0.9100);-webkit-text-stroke:0.3px #303030;'>5</div><div class='t' style='left:2107.58px;top:895.85px;font-size:22px;font-weight:400;color:#303030;transform:scaleX(0.9100);-webkit-text-stroke:0.3px #303030;'>4</div><div class='t' style='left:876.40px;top:963.35px;font-size:22px;font-weight:400;color:#303030;transform:scaleX(0.9100);-webkit-text-stroke:0.3px #303030;'>24-WB05</div><div class='t' style='left:1106.59px;top:963.35px;font-size:22px;font-weight:400;color:#303030;transform:scaleX(0.9100);-webkit-text-stroke:0.3px #303030;'>Savvy Shoulder Tote</div><div class='t' style='left:1523.38px;top:963.35px;font-size:22px;font-weight:400;color:#303030;transform:scaleX(0.9100);-webkit-text-stroke:0.3px #303030;'>1</div><div class='t' style='left:1654.33px;top:963.35px;font-size:22px;font-weight:400;color:#303030;transform:scaleX(0.9100);-webkit-text-stroke:0.3px #303030;'>$48.00</div><div class='t' style='left:1898.38px;top:963.35px;font-size:22px;font-weight:400;color:#303030;transform:scaleX(0.9100);-webkit-text-stroke:0.3px #303030;'>2</div><div class='t' style='left:2107.58px;top:963.35px;font-size:22px;font-weight:400;color:#303030;transform:scaleX(0.9100);-webkit-text-stroke:0.3px #303030;'>0</div><div class='t' style='left:876.40px;top:1030.85px;font-size:22px;font-weight:400;color:#303030;transform:scaleX(0.9100);-webkit-text-stroke:0.3px #303030;'>24-WG01</div><div class='t' style='left:1106.59px;top:1030.85px;font-size:22px;font-weight:400;color:#303030;transform:scaleX(0.9100);-webkit-text-stroke:0.3px #303030;'>Bolo Sport Watch</div><div class='t' style='left:1523.38px;top:1030.85px;font-size:22px;font-weight:400;color:#303030;transform:scaleX(0.9100);-webkit-text-stroke:0.3px #303030;'>1</div><div class='t' style='left:1654.33px;top:1030.85px;font-size:22px;font-weight:400;color:#303030;transform:scaleX(0.9100);-webkit-text-stroke:0.3px #303030;'>$49.00</div><div class='t' style='left:1898.38px;top:1030.85px;font-size:22px;font-weight:400;color:#303030;transform:scaleX(0.9100);-webkit-text-stroke:0.3px #303030;'>1</div><div class='t' style='left:2107.58px;top:1030.85px;font-size:22px;font-weight:400;color:#303030;transform:scaleX(0.9100);-webkit-text-stroke:0.3px #303030;'>0</div><div class='t' style='left:876.40px;top:1098.35px;font-size:22px;font-weight:400;color:#303030;transform:scaleX(0.9100);-webkit-text-stroke:0.3px #303030;'>24-WG081-pink</div><div class='t' style='left:1106.59px;top:1098.35px;font-size:22px;font-weight:400;color:#303030;transform:scaleX(0.9100);-webkit-text-stroke:0.3px #303030;'>Sprite Stasis Ball 55 cm</div><div class='t' style='left:1523.38px;top:1098.35px;font-size:22px;font-weight:400;color:#303030;transform:scaleX(0.9100);-webkit-text-stroke:0.3px #303030;'>1</div><div class='t' style='left:1654.33px;top:1098.35px;font-size:22px;font-weight:400;color:#303030;transform:scaleX(0.9100);-webkit-text-stroke:0.3px #303030;'>$46.00</div><div class='t' style='left:1898.38px;top:1098.35px;font-size:22px;font-weight:400;color:#303030;transform:scaleX(0.9100);-webkit-text-stroke:0.3px #303030;'>2</div><div class='t' style='left:2107.58px;top:1098.35px;font-size:22px;font-weight:400;color:#303030;transform:scaleX(0.9100);-webkit-text-stroke:0.3px #303030;'>0</div><div class='t' style='left:876.40px;top:1165.85px;font-size:22px;font-weight:400;color:#303030;transform:scaleX(0.9100);-webkit-text-stroke:0.3px #303030;'>24-WG082-blue</div><div class='t' style='left:1106.59px;top:1165.85px;font-size:22px;font-weight:400;color:#303030;transform:scaleX(0.9100);-webkit-text-stroke:0.3px #303030;'>Sprite Stasis Ball 65 cm</div><div class='t' style='left:1523.38px;top:1165.85px;font-size:22px;font-weight:400;color:#303030;transform:scaleX(0.9100);-webkit-text-stroke:0.3px #303030;'>2</div><div class='t' style='left:1642.50px;top:1165.85px;font-size:22px;font-weight:400;color:#303030;transform:scaleX(0.9100);-webkit-text-stroke:0.3px #303030;'>$189.00</div><div class='t' style='left:1898.38px;top:1165.85px;font-size:22px;font-weight:400;color:#303030;transform:scaleX(0.9100);-webkit-text-stroke:0.3px #303030;'>7</div><div class='t' style='left:2107.58px;top:1165.85px;font-size:22px;font-weight:400;color:#303030;transform:scaleX(0.9100);-webkit-text-stroke:0.3px #303030;'>0</div><div class='t' style='left:1608.40px;top:289.85px;font-size:22px;font-weight:400;color:#303030;transform:scaleX(0.9673);-webkit-text-stroke:0.8px #303030;'>$59,133.03</div><div class='t' style='left:1860.81px;top:289.85px;font-size:22px;font-weight:400;color:#303030;transform:scaleX(0.9896);-webkit-text-stroke:0.8px #303030;'>1359</div><div class='t' style='left:2081.69px;top:289.85px;font-size:22px;font-weight:400;color:#303030;transform:scaleX(1.0143);-webkit-text-stroke:0.8px #303030;'>132</div>
<div class='a' style='left:1368px;top:760px;width:29.5px;height:40px;background:#fff'></div>
</body></html>
